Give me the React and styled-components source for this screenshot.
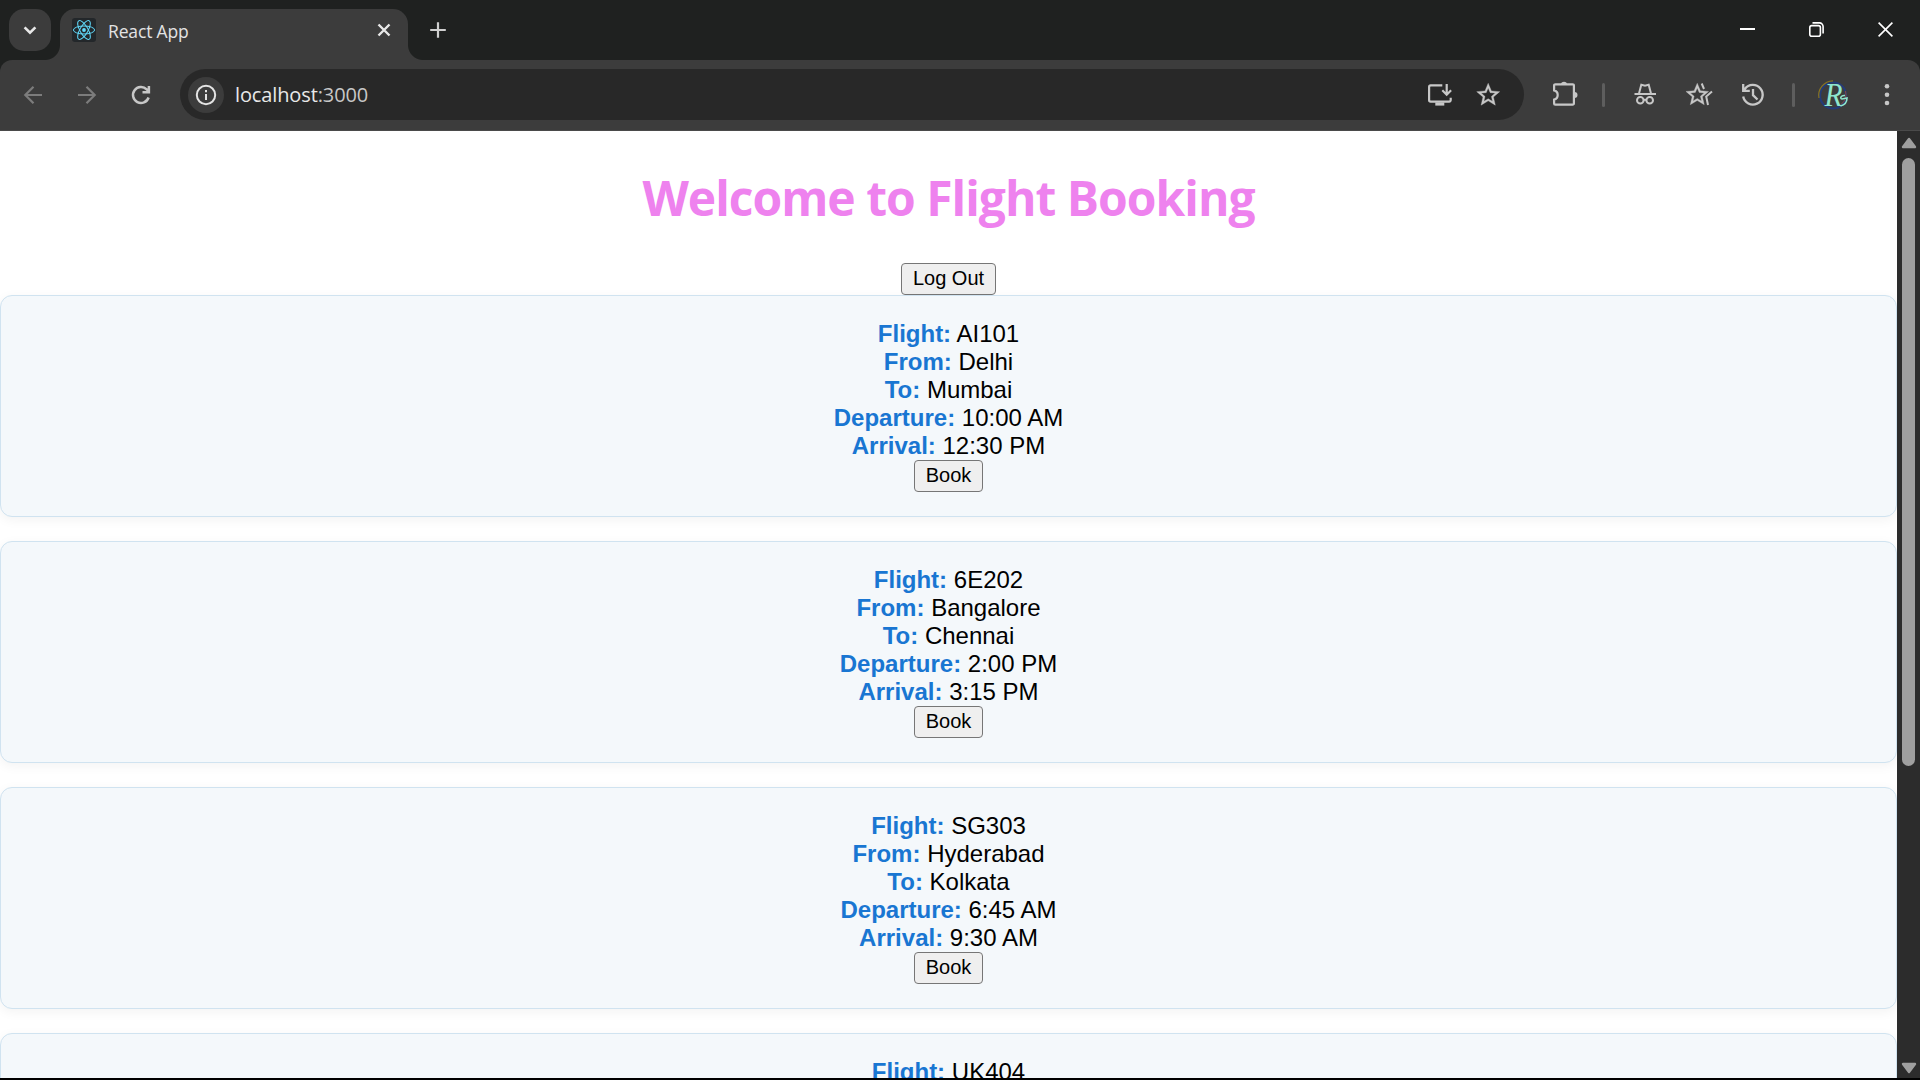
import React from "react";
import styled, { createGlobalStyle } from "styled-components";

const GlobalStyle = createGlobalStyle`
  *, *::before, *::after { box-sizing: border-box; }
  html, body { margin: 0; padding: 0; overflow: hidden; background: #000; }
`;

const ui = `"Open Sans", "Noto Sans", sans-serif`;
const arial = `"Liberation Sans", Arial, sans-serif`;

const Window = styled.div`
  display: flex;
  flex-direction: column;
  width: 1920px;
  height: 1080px;
  padding-bottom: 2px;
  overflow: hidden;
  background: #000;
`;

const TabStrip = styled.header`
  display: flex;
  flex: 0 0 60px;
  padding: 9px 0 0 9px;
  background: #1f2120;
`;

const TabSearch = styled.button`
  display: flex;
  align-items: center;
  justify-content: center;
  width: 42px;
  height: 42px;
  margin-right: 9px;
  padding: 0;
  border: 0;
  border-radius: 15px;
  background: #3c3c3c;
`;

const Tab = styled.div`
  position: relative;
  display: flex;
  align-items: center;
  width: 348px;
  height: 51px;
  padding: 0 12px 9px 12px;
  border-radius: 15px 15px 0 0;
  background: #3c3c3c;

  &::before,
  &::after {
    content: "";
    position: absolute;
    bottom: 0;
    width: 15px;
    height: 15px;
  }
  &::before {
    left: -15px;
    background: radial-gradient(circle at 0 0, transparent 14.5px, #3c3c3c 15.5px);
  }
  &::after {
    right: -15px;
    background: radial-gradient(circle at 100% 0, transparent 14.5px, #3c3c3c 15.5px);
  }
`;

const Favicon = styled.span`
  display: flex;
  width: 24px;
  height: 24px;
  border-radius: 3px;
  background: #23272a;
`;

const TabTitle = styled.span`
  flex: 1;
  padding: 2px 0 0 12px;
  color: #e3e3e3;
  font: 17.5px/24px ${ui};
  letter-spacing: -0.15px;
`;

const TabClose = styled.span`
  display: flex;
  width: 24px;
  height: 24px;
`;

const NewTab = styled.span`
  display: flex;
  align-items: center;
  justify-content: center;
  width: 42px;
  height: 42px;
  margin-left: 9px;
`;

const WindowControls = styled.div`
  display: flex;
  margin: -9px 0 0 auto;
`;

const WindowButton = styled.span`
  display: flex;
  align-items: center;
  justify-content: center;
  width: 69px;
  height: 59px;
`;

const ToolbarFrame = styled.div`
  flex: 0 0 71px;
  background: #1f2120;
`;

const Toolbar = styled.nav`
  display: flex;
  align-items: center;
  height: 71px;
  padding: 0 6px 1px;
  border-bottom: 1px solid #4a4a4a;
  border-radius: 12px 12px 0 0;
  background: #3c3c3c;
`;

const ToolButton = styled.span`
  display: flex;
  align-items: center;
  justify-content: center;
  flex: 0 0 ${(p) => p.$width || 54}px;
  height: 51px;
  padding-top: 1px;
  color: ${(p) => (p.$dim ? "#7c7c7c" : "#c7c7c7")};
`;

const Divider = styled.span`
  flex: 0 0 3px;
  height: 24px;
  margin: 0 ${(p) => p.$after}px 0 ${(p) => p.$before}px;
  border-radius: 2px;
  background: #5e5e5e;
`;

const AddressBar = styled.div`
  display: flex;
  align-items: center;
  flex: 0 0 1344px;
  height: 51px;
  margin: 0 14px 0 12px;
  padding: 0 12px 0 8px;
  border-radius: 26px;
  background: #282828;
`;

const SiteInfo = styled.span`
  display: flex;
  align-items: center;
  justify-content: center;
  width: 36px;
  height: 36px;
  border-radius: 50%;
  background: #3c3c3c;
  color: #e3e3e3;
`;

const Url = styled.span`
  flex: 1;
  padding-left: 11px;
  color: #e8e8e8;
  font: 20px/30px ${ui};
  letter-spacing: -0.12px;
`;

const Port = styled.span`
  color: #c7c7c7;
`;

const Viewport = styled.div`
  display: flex;
  flex: 1;
  min-height: 0;
`;

const Page = styled.main`
  flex: 1;
  min-width: 0;
  overflow: hidden;
  background: #fff;
  text-align: center;
`;

const Title = styled.h1`
  margin: 35px 0 33px;
  color: #ee82ee;
  font: 700 48px/64px ${ui};
  letter-spacing: -1px;
`;

const Button = styled.button`
  display: block;
  height: 32px;
  margin: 0 auto;
  padding: 0 11px 2px;
  border: 1px solid #767676;
  border-radius: 4px;
  background: #efefef;
  color: #000;
  font: 20px/28px ${arial};
`;

const FlightCard = styled.article`
  height: 222px;
  margin-bottom: 24px;
  padding: 24px;
  border: 1px solid #d0e3f0;
  border-radius: 12px;
  background: #f4f8fb;
  box-shadow: 0 3px 12px rgba(0, 0, 0, 0.05);
`;

const Detail = styled.div`
  color: #000;
  font: 24px/28px ${arial};
`;

const Label = styled.strong`
  color: #1976d2;
`;

const ScrollTrack = styled.div`
  display: flex;
  flex-direction: column;
  align-items: center;
  flex: 0 0 23px;
  background: #2c2c2c;
`;

const ScrollArrow = styled.span`
  display: flex;
  align-items: center;
  justify-content: center;
  height: ${(p) => p.$height}px;
`;

const ScrollThumb = styled.span`
  width: 13px;
  height: 608px;
  margin: 3px 0 auto;
  border-radius: 7px;
  background: #9f9f9f;
`;

const Icon = ({ size = 30, width = 2.2, children }) => (
  <svg
    width={size}
    height={size}
    viewBox={`0 0 ${size} ${size}`}
    fill="none"
    stroke="currentColor"
    strokeWidth={width}
  >
    {children}
  </svg>
);

const ReactMark = () => (
  <svg width="24" height="24" viewBox="0 0 24 24" fill="none" stroke="#61dafb" strokeWidth="1">
    <ellipse cx="12" cy="12" rx="10.6" ry="4" />
    <ellipse cx="12" cy="12" rx="10.6" ry="4" transform="rotate(60 12 12)" />
    <ellipse cx="12" cy="12" rx="10.6" ry="4" transform="rotate(120 12 12)" />
    <circle cx="12" cy="12" r="1.9" fill="#61dafb" stroke="none" />
  </svg>
);

const Avatar = () => (
  <svg width="32" height="32" viewBox="0 0 32 32" fill="none">
    <circle cx="16" cy="16.5" r="13" stroke="#243c78" strokeWidth="2.2" />
    <path d="M2 19A14.5 14.5 0 0 1 16 1.800" stroke="#8a7420" strokeWidth="1.2" />
    <path d="M28.500 12a13 13 0 0 1-4 13" stroke="#8f4a3a" strokeWidth="1" />
    <text x="7.500" y="26.500" fill="#8fe6cd" fontFamily="Liberation Serif, serif" fontStyle="italic" fontSize="34" textLength="18" lengthAdjust="spacingAndGlyphs">R</text>
    <path d="M28 16.500c-4-.5-5.500 3-3 3.500l5-1c0 4-2.500 7-6.500 8" stroke="#8fe6cd" strokeWidth="1.600" />
  </svg>
);

const flights = [
  ["AI101", "Delhi", "Mumbai", "10:00 AM", "12:30 PM"],
  ["6E202", "Bangalore", "Chennai", "2:00 PM", "3:15 PM"],
  ["SG303", "Hyderabad", "Kolkata", "6:45 AM", "9:30 AM"],
  ["UK404"],
];
const labels = ["Flight:", "From:", "To:", "Departure:", "Arrival:"];

export default function App() {
  return (
    <Window>
      <GlobalStyle />
      <TabStrip>
        <TabSearch>
          <svg width="18" height="18" viewBox="0 0 18 18" fill="none" stroke="#e8e8e8" strokeWidth="2.6">
            <path d="M3.6 6.3 9 11.7l5.4-5.4" />
          </svg>
        </TabSearch>
        <Tab>
          <Favicon><ReactMark /></Favicon>
          <TabTitle>React App</TabTitle>
          <TabClose>
            <svg width="24" height="24" viewBox="0 0 24 24" stroke="#e8e8e8" strokeWidth="2.4">
              <path d="m6.500 6.500 11 11m0-11-11 11" />
            </svg>
          </TabClose>
        </Tab>
        <NewTab>
          <svg width="24" height="24" viewBox="0 0 24 24" stroke="#d0d0d0" strokeWidth="2.2">
            <path d="M12 4.200v15.600M4.200 12h15.600" />
          </svg>
        </NewTab>
        <WindowControls>
          <WindowButton>
            <svg width="15" height="15" viewBox="0 0 15 15" stroke="#fff" strokeWidth="2"><path d="M0 7h15" /></svg>
          </WindowButton>
          <WindowButton>
            <svg width="15" height="15" viewBox="0 0 15 15" stroke="#fff" strokeWidth="1.6" fill="none">
              <rect x=".8" y="3.600" width="10.600" height="10.600" rx="2" />
              <path d="M3.500 .9h7A3.600 3.600 0 0 1 14.100 4.500v7" />
            </svg>
          </WindowButton>
          <WindowButton>
            <svg width="15" height="15" viewBox="0 0 15 15" stroke="#fff" strokeWidth="1.6"><path d="m.6.6 13.800 13.800m0-13.800L.6 14.400" /></svg>
          </WindowButton>
        </WindowControls>
      </TabStrip>

      <ToolbarFrame>
        <Toolbar>
          <ToolButton $dim><Icon><path d="M24 15H7.500M15.500 6.800 7.300 15l8.200 8.200" /></Icon></ToolButton>
          <ToolButton $dim><Icon><path d="M6 15h16.500M14.500 6.800l8.200 8.200-8.200 8.200" /></Icon></ToolButton>
          <ToolButton>
            <Icon width={2.5}>
              <path d="M22.600 17.500a8 8 0 1 1-1.900-8.200l2.300 2.400M22.900 6v6.200h-6.400" />
            </Icon>
          </ToolButton>
          <AddressBar>
            <SiteInfo>
              <Icon size={24} width={2}>
                <circle cx="12" cy="12" r="9.200" />
                <path d="M12 11v6M12 7v2.200" />
              </Icon>
            </SiteInfo>
            <Url>localhost<Port>:3000</Port></Url>
            <ToolButton $width={48}>
              <Icon>
                <path d="M17.300 5.400H5.600a1.500 1.500 0 0 0-1.500 1.500v13.200a1.500 1.500 0 0 0 1.500 1.500h18.600a1.500 1.500 0 0 0 1.500-1.500v-2.300" />
                <path d="M21.700 4v10.500M17.300 10.300l4.400 4.400 4.400-4.400" />
                <path d="M10.300 24h9" strokeWidth="3.200" />
              </Icon>
            </ToolButton>
            <ToolButton $width={48}>
              <Icon>
                <path
                  transform="translate(1.4 1) scale(1.15)"
                  fill="currentColor"
                  strokeWidth=".3"
                  d="M22 9.240l-7.190-.62L12 2 9.190 8.630 2 9.240l5.460 4.730L5.820 21 12 17.270 18.180 21l-1.630-7.030L22 9.240zM12 15.400l-3.760 2.270 1-4.280-3.320-2.880 4.380-.38L12 6.100l1.710 4.040 4.380.38-3.320 2.880 1 4.280L12 15.400z"
                />
              </Icon>
            </ToolButton>
          </AddressBar>
          <ToolButton>
            <Icon>
              <path d="M5.300 4.300h17.400a1.200 1.200 0 0 1 1.200 1.200v17.900a1.200 1.200 0 0 1-1.200 1.200H5.300a1.200 1.200 0 0 1-1.200-1.200v-3.800c4.800-1.200 4.800-8 0-9.200V5.500a1.200 1.200 0 0 1 1.200-1.200z" />
              <path d="M11 4.500a3 2.800 0 0 1 6 0zM24.500 12a3 3 0 0 1 0 6z" fill="currentColor" stroke="none" />
            </Icon>
          </ToolButton>
          <Divider $before={10} $after={13} />
          <ToolButton>
            <Icon width={2}>
              <path d="M4.500 14h21.500" />
              <path d="M9 13.500 11.300 4.800l3.700 1 3.700-1 2.300 8.700" />
              <circle cx="10.300" cy="20.300" r="3.300" />
              <circle cx="19.700" cy="20.300" r="3.300" />
              <path d="M13 19.800h4" />
            </Icon>
          </ToolButton>
          <ToolButton>
            <Icon width={2}>
              <path
                transform="translate(-.3 1) scale(1.13)"
                fill="currentColor"
                strokeWidth=".3"
                d="M22 9.240l-7.190-.62L12 2 9.190 8.630 2 9.240l5.460 4.730L5.820 21 12 17.270 18.180 21l-1.630-7.030L22 9.240zM12 15.400l-3.760 2.270 1-4.280-3.320-2.880 4.380-.38L12 6.100l1.710 4.040 4.380.38-3.320 2.880 1 4.280L12 15.400z"
              />
              <path d="M17.700 3.500 20 9M28 11.500l-5.800 5 1.800 8.500" />
            </Icon>
          </ToolButton>
          <ToolButton>
            <Icon width={2.300}>
              <path d="M5.200 16.500a9.800 9.800 0 1 0 1.700-7.500L5.700 10.500M5.200 4v6.800h6.600" />
              <path d="M15 9v6.200l4.500 4.300" />
            </Icon>
          </ToolButton>
          <Divider $before={12} $after={11} />
          <ToolButton><Avatar /></ToolButton>
          <ToolButton>
            <Icon>
              <g fill="currentColor" stroke="none">
                <circle cx="15" cy="6.300" r="2.300" />
                <circle cx="15" cy="14.700" r="2.300" />
                <circle cx="15" cy="23" r="2.300" />
              </g>
            </Icon>
          </ToolButton>
        </Toolbar>
      </ToolbarFrame>

      <Viewport>
        <Page>
          <Title>Welcome to Flight Booking</Title>
          <Button>Log Out</Button>
          {flights.map((values) => (
            <FlightCard key={values[0]}>
              {values.map((value, i) => (
                <Detail key={labels[i]}><Label>{labels[i]}</Label> {value}</Detail>
              ))}
              {values.length > 1 && <Button>Book</Button>}
            </FlightCard>
          ))}
        </Page>
        <ScrollTrack>
          <ScrollArrow $height={24}>
            <svg width="16" height="12" viewBox="0 0 16 12"><path d="M8 2 14 10H2z" fill="#9f9f9f" stroke="#9f9f9f" strokeWidth="2.4" strokeLinejoin="round" /></svg>
          </ScrollArrow>
          <ScrollThumb />
          <ScrollArrow $height={20}>
            <svg width="16" height="12" viewBox="0 0 16 12"><path d="M8 10 2 2h12z" fill="#9f9f9f" stroke="#9f9f9f" strokeWidth="2.4" strokeLinejoin="round" /></svg>
          </ScrollArrow>
        </ScrollTrack>
      </Viewport>
    </Window>
  );
}
